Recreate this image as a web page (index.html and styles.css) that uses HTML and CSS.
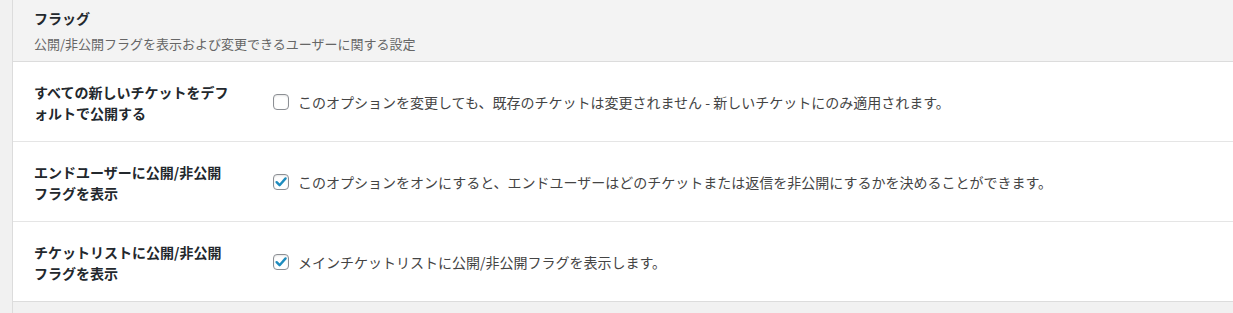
FILE: index.html
```html
<!DOCTYPE html>
<html lang="ja">
<head>
<meta charset="utf-8">
<title>フラッグ</title>
<link rel="stylesheet" href="styles.css">
</head>
<body>
<div class="page">
  <div class="panel">
    <div class="section-head">
      <h2 class="section-title">フラッグ</h2>
      <p class="section-desc">公開/非公開フラグを表示および変更できるユーザーに関する設定</p>
    </div>
    <div class="row">
      <div class="label">すべての新しいチケットをデフォルトで公開する</div>
      <label class="field">
        <span class="checkbox"></span>
        <span class="desc">このオプションを変更しても、既存のチケットは変更されません - 新しいチケットにのみ適用されます。</span>
      </label>
    </div>
    <div class="row">
      <div class="label">エンドユーザーに公開/非公開フラグを表示</div>
      <label class="field">
        <span class="checkbox checked"><svg viewBox="0 0 16 16" width="16" height="16"><path d="M3.6 8.2 L6.6 11.2 L12.6 4.4" fill="none" stroke="#1e8cbe" stroke-width="2.4" stroke-linecap="round" stroke-linejoin="round"/></svg></span>
        <span class="desc">このオプションをオンにすると、エンドユーザーはどのチケットまたは返信を非公開にするかを決めることができます。</span>
      </label>
    </div>
    <div class="row">
      <div class="label">チケットリストに公開/非公開フラグを表示</div>
      <label class="field">
        <span class="checkbox checked"><svg viewBox="0 0 16 16" width="16" height="16"><path d="M3.6 8.2 L6.6 11.2 L12.6 4.4" fill="none" stroke="#1e8cbe" stroke-width="2.4" stroke-linecap="round" stroke-linejoin="round"/></svg></span>
        <span class="desc">メインチケットリストに公開/非公開フラグを表示します。</span>
      </label>
    </div>
  </div>
</div>
</body>
</html>
```
FILE: styles.css
```css
html, body {
  margin: 0;
  padding: 0;
  background: #f1f1f1;
  font-family: "Noto Sans CJK JP", "Noto Sans", sans-serif;
  color: #23282d;
}
.page {
  padding-left: 12px;
  min-height: 313px;
  box-sizing: border-box;
}
.panel {
  border-left: 1px solid #dcdcdc;
  min-height: 313px;
  box-sizing: border-box;
}
.section-head {
  background: #f3f3f3;
  height: 62px;
  box-sizing: border-box;
  padding: 8px 0 0 21px;
  border-bottom: 1px solid #dcdcdc;
}
.section-title {
  margin: 0;
  font-size: 14px;
  line-height: 20px;
  font-weight: 700;
  color: #23282d;
}
.section-desc {
  margin: 6px 0 0;
  font-size: 13px;
  line-height: 20px;
  color: #666;
}
.row {
  display: flex;
  align-items: center;
  height: 80px;
  box-sizing: border-box;
  background: #fff;
  border-bottom: 1px solid #e5e5e5;
  padding-left: 21px;
}
.row:last-child {
  border-bottom-color: #dcdcdc;
}
.label {
  width: 200px;
  flex: none;
  font-size: 14px;
  line-height: 21px;
  font-weight: 700;
  color: #23282d;
  margin-right: 39px;
  padding-top: 2px;
}
.field {
  display: flex;
  align-items: center;
}
.checkbox {
  width: 16px;
  height: 16px;
  box-sizing: border-box;
  border: 1px solid #8c8f94;
  border-radius: 4px;
  background: #fff;
  box-shadow: inset 0 1px 2px rgba(0,0,0,.1);
  margin-right: 9px;
  flex: none;
  position: relative;
}
.checkbox svg {
  position: absolute;
  left: -1px;
  top: -1px;
}
.desc {
  font-size: 14px;
  line-height: 20px;
  color: #444;
}
```
